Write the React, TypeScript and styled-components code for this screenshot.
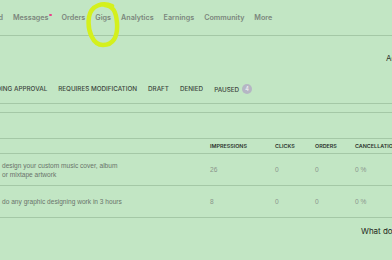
import React from 'react'
import styled, { createGlobalStyle } from 'styled-components'

const GlobalStyle = createGlobalStyle`
  html, body {
    margin: 0;
    padding: 0;
    background: #c2e6c4;
    font-family: "Inter", "Liberation Sans", sans-serif;
  }
`;

const Page = styled.div`
  width: 392px;
  height: 260px;
  overflow: hidden;
  background: #c2e6c4;
`;

const Inner = styled.div`
  width: 520px;
  margin-left: -50px;
`;

const Nav = styled.nav`
  display: flex;
  align-items: center;
  gap: 10px;
  height: 35px;
  padding-left: 15px;
  border-bottom: 1px solid #a4c8a6;
`;

const NavItem = styled.span<{ $dot?: boolean }>`
  position: relative;
  font-size: 7.2px;
  line-height: 10px;
  font-weight: 600;
  color: #7c867d;
  padding-right: ${p => (p.$dot ? '3px' : '0')};
  &::after {
    content: '';
    display: ${p => (p.$dot ? 'block' : 'none')};
    position: absolute;
    right: 0;
    top: 1px;
    width: 2.5px;
    height: 2.5px;
    border-radius: 50%;
    background: #e8408a;
  }
`;

const Scribble = styled.svg`
  position: absolute;
  left: -10px;
  top: -12px;
  pointer-events: none;
`;

const AcceptRow = styled.div`
  display: flex;
  height: 44px;
  padding-left: 436px;
  align-items: center;
  font-size: 8px;
  color: #2d352e;
  white-space: nowrap;
`;

const Tabs = styled.div`
  display: flex;
  align-items: flex-start;
  gap: 11px;
  height: 18px;
  padding-top: 5px;
  padding-left: 0;
  border-bottom: 1px solid #a4c8a6;
`;

const Tab = styled.span`
  font-size: 6.3px;
  line-height: 8px;
  font-weight: 500;
  color: #3d463e;
  display: flex;
  align-items: center;
  gap: 3px;
  white-space: nowrap;
`;

const Badge = styled.span`
  width: 10px;
  height: 10px;
  margin-top: -1px;
  border-radius: 50%;
  background: #b5b6c4;
  color: #f2f2f6;
  font-size: 5.5px;
  display: flex;
  align-items: center;
  justify-content: center;
`;

const Divider = styled.div<{ $h: number }>`
  height: ${p => p.$h}px;
  border-bottom: 1px solid #a4c8a6;
`;

const Grid = styled.div`
  display: grid;
  grid-template-columns: 260px 65px 40px 40px 1fr;
`;

const HeadCell = styled.div`
  height: 14px;
  display: flex;
  align-items: center;
  font-size: 5.4px;
  font-weight: 600;
  color: #2b332c;
  white-space: nowrap;
  border-bottom: 1px solid #a4c8a6;
`;

const Cell = styled.div<{ $title?: boolean }>`
  height: 31px;
  display: flex;
  align-items: center;
  padding-left: ${p => (p.$title ? '52px' : '0')};
  font-family: "Liberation Sans", sans-serif;
  font-size: 6.6px;
  line-height: 9px;
  color: ${p => (p.$title ? '#6a746b' : '#8a948b')};
  border-bottom: 1px solid #a4c8a6;
`;

const Footer = styled.div`
  display: flex;
  padding-left: 411px;
  height: 26px;
  align-items: center;
  font-size: 8px;
  color: #1f2620;
  white-space: nowrap;
`;

const navItems = ['Dashboard', 'Messages', 'Orders', 'Gigs', 'Analytics', 'Earnings', 'Community', 'More'];
const tabs = ['ACTIVE', 'PENDING APPROVAL', 'REQUIRES MODIFICATION', 'DRAFT', 'DENIED', 'PAUSED'];
const gigs = [
  { title: ['design your custom music cover, album', 'or mixtape artwork'], impressions: 26 },
  { title: ['do any graphic designing work in 3 hours'], impressions: 8 },
];

const App = () => {
  return (
    <Page>
      <GlobalStyle />
      <Inner>
        <Nav>
          {navItems.map(item => (
            <NavItem key={item} $dot={item === 'Messages'}>
              {item}
              {item === 'Gigs' && (
                <Scribble width="40" height="48" viewBox="0 0 40 48">
                  <path
                    d="M27 5 C18 1 6 4 4 16 C2 30 8 44 18 44 C28 44 33 36 32 22 C31 10 28 5 20 4"
                    fill="none"
                    stroke="#d4f01d"
                    strokeWidth="4.5"
                    strokeLinecap="round"
                  />
                </Scribble>
              )}
            </NavItem>
          ))}
        </Nav>
        <AcceptRow>Accepting Custom Orders</AcceptRow>
        <Tabs>
          {tabs.map(t => (
            <Tab key={t}>
              {t}
              {t === 'PAUSED' && <Badge>4</Badge>}
            </Tab>
          ))}
        </Tabs>
        <Divider $h={8} />
        <Divider $h={25} />
        <Grid>
          <HeadCell />
          <HeadCell>IMPRESSIONS</HeadCell>
          <HeadCell>CLICKS</HeadCell>
          <HeadCell>ORDERS</HeadCell>
          <HeadCell>CANCELLATIONS</HeadCell>
          {gigs.map(g => (
            <React.Fragment key={g.title[0]}>
              <Cell $title>
                <div>
                  {g.title.map(line => (
                    <div key={line}>{line}</div>
                  ))}
                </div>
              </Cell>
              <Cell>{g.impressions}</Cell>
              <Cell>0</Cell>
              <Cell>0</Cell>
              <Cell>0 %</Cell>
            </React.Fragment>
          ))}
        </Grid>
        <Footer>What does this mean?</Footer>
      </Inner>
    </Page>
  )
}

export default App
